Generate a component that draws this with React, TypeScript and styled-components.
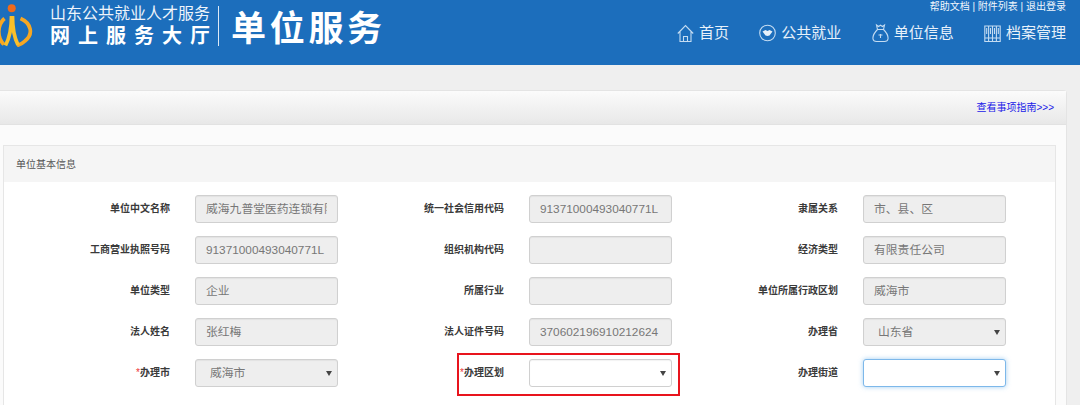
import React from "react";
import styled, { createGlobalStyle } from "styled-components";

const Global = createGlobalStyle`
  html, body { margin: 0; padding: 0; height: 405px; overflow: hidden; background: #efefef; }
  body { font-family: "Liberation Sans", "Noto Sans CJK SC", sans-serif; }
`;
const Page = styled.div`width: 1080px; height: 405px; overflow: hidden; background: #efefef;`;
const Header = styled.header`
  height: 65px; background: #1c6ebc; color: #fff; display: flex; justify-content: space-between; position: relative;
`;
const Brand = styled.div`display: flex; align-items: flex-start;`;
const LogoMark = styled.svg`width: 33px; height: 47px; flex: none;`;
const BrandLines = styled.div`margin: 4px 0 0 17px; display: flex; flex-direction: column; width: 160px;`;
const BrandTop = styled.div`
  font-family: "Noto Sans CJK SC", sans-serif; font-size: 16px; line-height: 17px; white-space: nowrap; color: #eef4fb;
`;
const BrandBottom = styled.div`
  font-family: "Noto Sans CJK SC", sans-serif; font-size: 20px; font-weight: 700; line-height: 24px; letter-spacing: 8px; white-space: nowrap; margin-top: 2px;
`;
const Divider = styled.div`width: 1px; height: 40px; background: #dce9f6; margin: 6px 12px 0 8px;`;
const BrandTitle = styled.div`
  font-family: "Noto Sans CJK SC", sans-serif; font-size: 35px; font-weight: 700; line-height: 40px; letter-spacing: 3.7px; margin-top: 6px; white-space: nowrap;
`;
const HeaderRight = styled.div`display: flex; flex-direction: column; align-items: flex-end; padding-right: 14px;`;
const TopLinks = styled.div`font-size: 10px; line-height: 12px; margin-top: 1px; color: #f1f6fc; white-space: nowrap;`;
const Nav = styled.nav`display: flex; gap: 30.3px; margin-top: 9px;`;
const NavItem = styled.div`display: flex; align-items: center; gap: 5px; font-size: 15px; line-height: 22px; color: #e8f1fa; white-space: nowrap;`;
const NavIcon = styled.svg`width: 17px; height: 20px; flex: none; fill: none; stroke: #c4dcf2; stroke-width: 1.1;`;

const Outer = styled.section`
  margin-top: 25px; width: 1067px; border: 1px solid #e4e4e4; border-left: 0; border-radius: 0 4px 0 0; box-sizing: border-box; background: #fbfbfb;
`;
const OuterHead = styled.div`
  height: 33px; background: linear-gradient(#fbfbfb, #e8e8e8); border-bottom: 1px solid #e2e2e2; display: flex; justify-content: flex-end; align-items: center; padding: 0 12px 0 0;
`;
const GuideLink = styled.a`font-size: 10px; color: #2020e8; line-height: 12px; margin-top: 1px;`;
const OuterBody = styled.div`padding: 20px 10px 0 3px;`;
const Inner = styled.div`border: 1px solid #e6e6e6; border-bottom: 0; background: #fff;`;
const InnerHead = styled.div`height: 36px; box-sizing: border-box; padding: 0 12px 1px; background: #f5f5f5; font-size: 10px; color: #555; display: flex; align-items: center; margin-bottom: 13px;`;
const Grid = styled.div`display: grid; grid-template-columns: 334px 334px 334px; grid-auto-rows: 28px; row-gap: 13px; padding-bottom: 60px;`;
const Field = styled.div`display: grid; grid-template-columns: 1fr 143px; column-gap: 25px; align-items: center; position: relative;`;
const Label = styled.label`font-size: 10px; font-weight: 700; color: #3a3a3a; text-align: right; line-height: 14px; white-space: nowrap;`;
const Star = styled.span`color: #e33; font-weight: 400;`;
const Box = styled.div<{ $disabled?: boolean; $focus?: boolean }>`
  height: 28px; width: 143px; box-sizing: border-box; border-radius: 3px; position: relative;
  border: 1px solid ${p => (p.$focus ? "#7db8ea" : "#d0d0d0")};
  background: ${p => (p.$disabled ? "#eeeeee" : "#fff")};
  box-shadow: ${p => (p.$focus ? "0 0 5px rgba(102,175,233,.6)" : "inset 0 1px 1px rgba(0,0,0,.05)")};
  font-size: 11.8px; line-height: 27px; color: #777; padding: 0 10px; white-space: nowrap;
`;
const SelectBox = styled(Box)`padding-left: 14px; padding-right: 20px;`;
const Value = styled.span`display: block; overflow: hidden; height: 26px;`;
const Arrow = styled.span`
  position: absolute; right: 5px; top: 11px; width: 0; height: 0;
  border-left: 3px solid transparent; border-right: 3px solid transparent; border-top: 5px solid #444;
`;
const Highlight = styled.div`
  position: absolute; left: 118.5px; top: -6px; width: 223px; height: 43px; box-sizing: border-box; border: 2px solid #e8141d; pointer-events: none;
`;

type F = { label: string; value?: string; kind?: "input" | "select"; req?: boolean; focus?: boolean; hl?: boolean; enabled?: boolean };
const fields: F[] = [
  { label: "单位中文名称", value: "威海九普堂医药连锁有限公司" },
  { label: "统一社会信用代码", value: "91371000493040771L" },
  { label: "隶属关系", value: "市、县、区" },
  { label: "工商营业执照号码", value: "91371000493040771L" },
  { label: "组织机构代码", value: "" },
  { label: "经济类型", value: "有限责任公司" },
  { label: "单位类型", value: "企业" },
  { label: "所属行业", value: "" },
  { label: "单位所属行政区划", value: "威海市" },
  { label: "法人姓名", value: "张红梅" },
  { label: "法人证件号码", value: "370602196910212624" },
  { label: "办理省", value: "山东省", kind: "select" },
  { label: "办理市", value: "威海市", kind: "select", req: true },
  { label: "办理区划", kind: "select", req: true, hl: true, enabled: true },
  { label: "办理街道", kind: "select", focus: true, enabled: true },
];

export default function App() {
  return (
    <Page>
      <Global />
      <Header>
        <Brand>
          <LogoMark viewBox="0 0 33 47">
            <circle cx="11.7" cy="8.3" r="4" fill="#ef6a1c" />
            <g fill="none" stroke="#f7a722" strokeWidth="3.7">
              <path d="M20.5 18.5 C31 23 34 34 25 41 C23 43 21 44.5 17 45.5" />
              <path d="M4.5 18.5 C-3 25 -3 38 4 44.5" />
              <path d="M12.5 16 C12.5 28 14 37 18 45" stroke="#fbc02a" />
              <path d="M11.5 16 C11.5 28 10 37 5.5 45.5" stroke="#fbc02a" />
            </g>
          </LogoMark>
          <BrandLines>
            <BrandTop>山东公共就业人才服务</BrandTop>
            <BrandBottom>网上服务大厅</BrandBottom>
          </BrandLines>
          <Divider />
          <BrandTitle>单位服务</BrandTitle>
        </Brand>
        <HeaderRight>
          <TopLinks>帮助文档 | 附件列表 | 退出登录</TopLinks>
          <Nav>
            <NavItem>
              <NavIcon viewBox="0 0 17 20"><path d="M0.8 10.5 L8.5 2.5 L16.2 10.5 M3 8.5 V18.5 H14 V8.5 M6.5 18.5 V13.5 H10.5 V18.5" /></NavIcon>
              首页
            </NavItem>
            <NavItem>
              <NavIcon viewBox="0 0 17 20"><circle cx="8.5" cy="10" r="7.8" /><path d="M3.5 8.5 L6.5 7 L8.5 8 L10.5 7 L13.5 8.5 L10.5 12.5 L8.5 13 L6.5 12.5 Z" fill="#e6f0fa" stroke="none" /></NavIcon>
              公共就业
            </NavItem>
            <NavItem>
              <NavIcon viewBox="0 0 17 20"><path d="M4.5 2 L6.5 3.5 L8.5 2.2 L10.5 3.5 L12.5 2 L11.5 6.5 H5.5 Z M5.5 6.5 C 3 9, 0.6 13, 1 16 C 1.3 18, 2.5 18.5 4.5 18.5 H12.5 C 14.5 18.5 15.7 18 16 16 C 16.4 13, 14 9, 11.5 6.5 M6.5 12 H10.5 M8.5 11 V15" /></NavIcon>
              单位信息
            </NavItem>
            <NavItem>
              <NavIcon viewBox="0 0 17 20"><path d="M0.8 3 H16.2 V18.5 H0.8 Z M4.6 3 V18.5 M8.5 3 V18.5 M12.4 3 V18.5 M2.7 5 V11 M6.5 5 V11 M10.5 5 V11 M14.3 5 V11 M0.8 15 H16.2" /></NavIcon>
              档案管理
            </NavItem>
          </Nav>
        </HeaderRight>
      </Header>
      <Outer>
        <OuterHead><GuideLink>查看事项指南&gt;&gt;&gt;</GuideLink></OuterHead>
        <OuterBody>
          <Inner>
            <InnerHead>单位基本信息</InnerHead>
            <Grid>
              {fields.map(f => (
                <Field key={f.label}>
                  <Label>{f.req && <Star>*</Star>}{f.label}</Label>
                  {f.kind === "select" ? (
                    <SelectBox $disabled={!f.enabled} $focus={f.focus}><Value>{f.value}</Value><Arrow /></SelectBox>
                  ) : (
                    <Box $disabled><Value>{f.value}</Value></Box>
                  )}
                  {f.hl && <Highlight />}
                </Field>
              ))}
            </Grid>
          </Inner>
        </OuterBody>
      </Outer>
    </Page>
  );
}
